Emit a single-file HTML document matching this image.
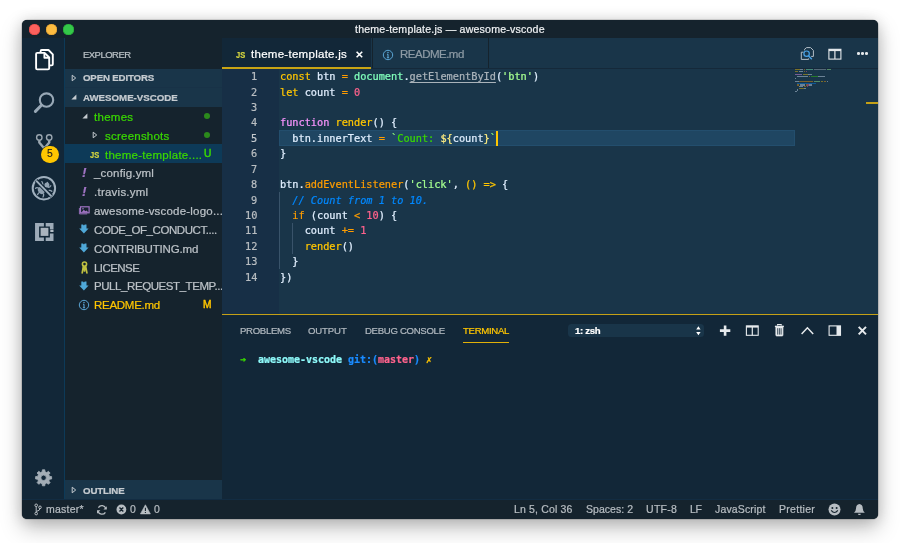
<!DOCTYPE html>
<html lang="en">
<head>
<meta charset="utf-8">
<title>theme-template.js — awesome-vscode</title>
<style>
html,body{margin:0;padding:0;background:#fff;}
body{width:900px;height:543px;position:relative;overflow:hidden;font-family:"Liberation Sans", "DejaVu Sans", sans-serif;}
#win{position:absolute;left:22px;top:20px;width:856px;height:498.6px;border-radius:5px;background:#15232d;
 box-shadow:0 0 0 .6px rgba(0,0,0,.22),0 9px 21px rgba(0,0,0,.25),0 1px 14px rgba(0,0,0,.15);}
#clip{position:absolute;left:22px;top:20px;width:856px;height:498.6px;border-radius:5px;overflow:hidden;}
#abs{position:absolute;left:-22px;top:-20px;width:900px;height:543px;will-change:transform;}
.b{position:absolute;}
.t{position:absolute;white-space:pre;line-height:20px;height:20px;}
.m{font-family:"DejaVu Sans Mono", "Liberation Mono", monospace;}
.t{-webkit-text-stroke:.22px currentColor;transform:rotate(.01deg);}
svg{position:absolute;overflow:visible;}
</style>
</head>
<body>
<div id="win"></div>
<div id="clip"><div id="abs">

<!-- title bar -->
<div class="b" style="left:22.00px;top:20.00px;width:856.00px;height:18.35px;background:#15232d;"></div>
<div class="b" style="left:29.10px;top:24.00px;width:10.6px;height:10.6px;border-radius:50%;background:#fc615d;box-shadow:inset 0 0 0 .6px #df4744;"></div>
<div class="b" style="left:46.20px;top:24.00px;width:10.6px;height:10.6px;border-radius:50%;background:#fdbc40;box-shadow:inset 0 0 0 .6px #de9f34;"></div>
<div class="b" style="left:63.30px;top:24.00px;width:10.6px;height:10.6px;border-radius:50%;background:#34c84a;box-shadow:inset 0 0 0 .6px #27aa35;"></div>
<span class="t" style="left:355.20px;top:19.42px;font-size:10.60px;color:#eef0f2;letter-spacing:0.196px;">theme-template.js — awesome-vscode</span>
<!-- activity bar -->
<div class="b" style="left:22.00px;top:38.35px;width:42.80px;height:461.05px;background:#122738;border-right:1px solid #0d3a58;box-sizing:border-box;"></div>
<svg style="left:34px;top:48px" width="22" height="24" viewBox="0 0 22 24"><g fill="none" stroke="#fff" stroke-width="1.9" stroke-linejoin="round">
<path d="M6.6 4.6V3.2Q6.6 2 7.8 2H14.5L18.8 6.3V16.2Q18.8 17.4 17.6 17.4H15.6"/>
<path d="M3.3 4.9H10.6L15.2 9.5V20.2Q15.2 21.4 14 21.4H3.3Q2.1 21.4 2.1 20.2V6.1Q2.1 4.9 3.3 4.9Z" fill="#122738"/>
<path d="M10.4 5.2V9.8H15"/></g></svg>
<svg style="left:32px;top:91px" width="24" height="24" viewBox="0 0 24 24"><g fill="none" stroke="#98a8b6" stroke-linecap="round">
<circle cx="14.5" cy="9.1" r="6.7" stroke-width="2.1"/><path d="M9.4 14.3L3.4 20.4" stroke-width="3"/></g></svg>
<svg style="left:32px;top:130px" width="26" height="26" viewBox="0 0 26 26"><g fill="none" stroke="#9aa6b0">
<path d="M7.3 10.6V12.6L12.3 18.6M17.2 10.6V12.6L12.3 18.6" stroke-width="2.4" stroke-linejoin="round"/>
<circle cx="7.3" cy="7.5" r="2.7" stroke-width="1.4" fill="#122738"/><circle cx="17.2" cy="7.5" r="2.7" stroke-width="1.4" fill="#122738"/></g></svg>
<div class="b" style="left:41.40px;top:145.60px;width:17.4px;height:17.4px;border-radius:50%;background:#ffc600;box-shadow:0 0 0 .6px #122738;"></div>
<span class="t" style="left:47.20px;top:144.49px;font-size:10.40px;color:#1c1c1c;-webkit-text-stroke:.1px currentColor;">5</span>
<svg style="left:30px;top:174px" width="28" height="28" viewBox="0 0 28 28"><g fill="none" stroke="#a0b0be" stroke-width="2">
<circle cx="13.9" cy="14.2" r="11.2"/>
<g stroke-width="1.3" stroke-linecap="round" stroke="#93a4b3"><path d="M11.9 7.6Q12.8 8.6 12.8 10.6M17.6 8.4Q16.6 9.4 16.4 10.8M9.2 14.4Q6.8 13 5.6 14.2M9.6 18.2Q7.8 19.4 7.6 20.6M13.6 20Q13.8 21.8 13 23M18.2 13.4Q20 13.4 20.8 11.8M19 16.4Q20.8 16.2 21.8 17.2"/></g>
<ellipse cx="11.3" cy="16.5" rx="3.1" ry="3.8" transform="rotate(-40 11.3 16.5)" fill="#8fa0af" stroke="none"/>
<circle cx="16.9" cy="11" r="2.5" fill="#93a4b3" stroke="none"/>
<path d="M6 6.4L21.6 22.4" stroke="#122738" stroke-width="3.8"/><path d="M6.1 6.6L21.5 22.3" stroke-width="1.9"/></g></svg>
<svg style="left:34px;top:222px" width="21" height="20" viewBox="0 0 21 20"><g fill="#9dabb8">
<path d="M1.05 0.9H9.9V4.4H5.1V15.4H9.9V18.9H1.05Z"/>
<path d="M11.7 0.9H19.5V7.3H15.9V4.4H11.7Z"/>
<rect x="16.3" y="7.7" width="3.2" height="2.3" fill="#b3bdc6"/>
<path d="M15.9 11.4H19.5V18.9H11.7V15.4H15.9Z"/></g>
<rect x="6.6" y="5.8" width="7.8" height="8.1" fill="#aab4be"/></svg>
<svg style="left:34px;top:468px" width="20" height="20" viewBox="0 0 20 20"><path fill="#a3adb6" fill-rule="evenodd" stroke="#a3adb6" stroke-width=".8" stroke-linejoin="round" d="M8.18 3.87L8.40 1.79L10.80 1.79L11.02 3.87L12.79 4.60L14.41 3.28L16.12 4.99L14.80 6.61L15.53 8.38L17.61 8.60L17.61 11.00L15.53 11.22L14.80 12.99L16.12 14.61L14.41 16.32L12.79 15.00L11.02 15.73L10.80 17.81L8.40 17.81L8.18 15.73L6.41 15.00L4.79 16.32L3.08 14.61L4.40 12.99L3.67 11.22L1.59 11.00L1.59 8.60L3.67 8.38L4.40 6.61L3.08 4.99L4.79 3.28L6.41 4.60ZM6.90 9.80a2.70 2.70 0 1 0 5.40 0a2.70 2.70 0 1 0 -5.40 0Z"/></svg>
<!-- sidebar -->
<div class="b" style="left:64.80px;top:38.35px;width:157.50px;height:461.05px;background:#15232d;"></div>
<span class="t" style="left:82.90px;top:44.91px;font-size:9.50px;color:#b9c0c5;letter-spacing:-0.527px;">EXPLORER</span>
<div class="b" style="left:64.80px;top:68.80px;width:157.50px;height:37.90px;background:#193549;"></div>
<div class="b" style="left:64.80px;top:87.40px;width:157.50px;height:0.60px;background:#183247;"></div>
<span class="t" style="left:82.90px;top:68.34px;font-size:9.70px;color:#c5cbd0;font-weight:700;letter-spacing:-0.168px;">OPEN EDITORS</span>
<span class="t" style="left:82.90px;top:87.64px;font-size:9.70px;color:#c5cbd0;font-weight:700;">AWESOME-VSCODE</span>
<svg style="left:70.20px;top:73.30px" width="8" height="10" viewBox="0 0 8 10"><path d="M2.2 2.2L5.7 5L2.2 7.8Z" fill="none" stroke="#c5cbd0" stroke-width="1" stroke-linejoin="round"/></svg>
<svg style="left:70.00px;top:93.30px" width="8" height="8" viewBox="0 0 8 8"><path d="M6.4 1.4V6.4H1.4Z" fill="#c5cbd0"/></svg>
<div class="b" style="left:64.80px;top:144.06px;width:157.50px;height:18.83px;background:#0d3a58;"></div>
<svg style="left:81.20px;top:112.10px" width="8" height="8" viewBox="0 0 8 8"><path d="M6.4 1.4V6.4H1.4Z" fill="#c5cbd0"/></svg>
<span class="t" style="left:94.20px;top:106.91px;font-size:11.50px;color:#3ad900;letter-spacing:0.269px;">themes</span>
<svg style="left:91.40px;top:130.13px" width="8" height="10" viewBox="0 0 8 10"><path d="M2.2 2.2L5.7 5L2.2 7.8Z" fill="none" stroke="#c5cbd0" stroke-width="1" stroke-linejoin="round"/></svg>
<span class="t" style="left:104.70px;top:125.74px;font-size:11.50px;color:#3ad900;letter-spacing:0.227px;">screenshots</span>
<div class="b" style="left:203.9px;top:113.20px;width:6.2px;height:6.2px;border-radius:50%;background:#2b8a1c;"></div>
<div class="b" style="left:203.9px;top:132.03px;width:6.2px;height:6.2px;border-radius:50%;background:#2b8a1c;"></div>
<span class="t" style="left:89.90px;top:144.70px;font-size:9.40px;color:#d4d43f;font-weight:700;transform:rotate(.01deg) scaleX(.8);transform-origin:0 50%;">JS</span>
<span class="t" style="left:104.70px;top:144.57px;font-size:11.50px;color:#3ad900;letter-spacing:0.257px;">theme-template....</span>
<span class="t" style="left:204.30px;top:144.32px;font-size:10.20px;color:#3ad900;-webkit-text-stroke:.45px currentColor;">U</span>
<span class="t" style="left:81.60px;top:163.01px;font-size:13.50px;color:#a074c4;font-weight:700;font-style:italic;">!</span>
<span class="t" style="left:94.20px;top:163.40px;font-size:11.50px;color:#bcc2c7;letter-spacing:0.174px;">_config.yml</span>
<span class="t" style="left:81.60px;top:181.84px;font-size:13.50px;color:#a074c4;font-weight:700;font-style:italic;">!</span>
<span class="t" style="left:94.20px;top:182.23px;font-size:11.50px;color:#bcc2c7;letter-spacing:0.243px;">.travis.yml</span>
<svg style="left:78.8px;top:206.15px" width="11" height="9" viewBox="0 0 11 9"><rect x="1.5" y="0.8" width="8.6" height="6" fill="none" stroke="#a074c4" stroke-width="1.2"/><path d="M0.4 2V7.9H8.2" fill="none" stroke="#a074c4" stroke-width=".9"/><path d="M2.4 6.4L4.8 3.8L6.4 5.2L7.6 4.4L9.4 6.4Z" fill="#a074c4"/><circle cx="4" cy="2.8" r="0.8" fill="#a074c4"/></svg>
<span class="t" style="left:94.20px;top:201.06px;font-size:11.50px;color:#bcc2c7;letter-spacing:0.202px;">awesome-vscode-logo....</span>
<svg style="left:79.2px;top:224.08px" width="10" height="10" viewBox="0 0 10 10"><path d="M2.3 0.6H4L4.9 1.5L5.8 0.6H7.5V4.6H9.6L4.9 9.4L0.2 4.6H2.3Z" fill="#4fa8d8"/></svg>
<span class="t" style="left:94.20px;top:219.89px;font-size:11.50px;color:#bcc2c7;letter-spacing:-0.428px;">CODE_OF_CONDUCT....</span>
<svg style="left:79.2px;top:242.91px" width="10" height="10" viewBox="0 0 10 10"><path d="M2.3 0.6H4L4.9 1.5L5.8 0.6H7.5V4.6H9.6L4.9 9.4L0.2 4.6H2.3Z" fill="#4fa8d8"/></svg>
<span class="t" style="left:94.20px;top:238.72px;font-size:11.50px;color:#bcc2c7;letter-spacing:-0.173px;">CONTRIBUTING.md</span>
<svg style="left:79.5px;top:261.04px" width="9" height="13" viewBox="0 0 9 13"><g fill="none" stroke="#c0c040"><circle cx="4.5" cy="3.1" r="2.1" stroke-width="1.6"/><path d="M3.4 5.2L2.2 11.8M5.6 5.2L6.9 11.8M4.5 6V10" stroke-width="1.7" stroke-linecap="round"/></g></svg>
<span class="t" style="left:94.20px;top:257.55px;font-size:11.50px;color:#bcc2c7;letter-spacing:-0.557px;">LICENSE</span>
<svg style="left:79.2px;top:280.57px" width="10" height="10" viewBox="0 0 10 10"><path d="M2.3 0.6H4L4.9 1.5L5.8 0.6H7.5V4.6H9.6L4.9 9.4L0.2 4.6H2.3Z" fill="#4fa8d8"/></svg>
<span class="t" style="left:94.20px;top:276.38px;font-size:11.50px;color:#bcc2c7;letter-spacing:-0.425px;">PULL_REQUEST_TEMP...</span>
<svg style="left:77.80px;top:299.20px" width="12" height="12" viewBox="0 0 12 12"><circle cx="6" cy="6" r="4.7" fill="none" stroke="#5aa5d4" stroke-width="1"/><path d="M6 5.2V8.6M4.9 8.7H7.1M5 5.3H6" stroke="#5aa5d4" stroke-width="1.1" fill="none"/><circle cx="6" cy="3.5" r="0.75" fill="#5aa5d4"/></svg>
<span class="t" style="left:94.20px;top:295.21px;font-size:11.50px;color:#ffc600;letter-spacing:-0.280px;">README.md</span>
<span class="t" style="left:203.30px;top:294.96px;font-size:10.20px;color:#ffc600;-webkit-text-stroke:.45px currentColor;">M</span>
<div class="b" style="left:64.80px;top:480.40px;width:157.50px;height:19.00px;background:#193549;"></div>
<svg style="left:70.20px;top:485.40px" width="8" height="10" viewBox="0 0 8 10"><path d="M2.2 2.2L5.7 5L2.2 7.8Z" fill="none" stroke="#c5cbd0" stroke-width="1" stroke-linejoin="round"/></svg>
<span class="t" style="left:82.90px;top:480.64px;font-size:9.70px;color:#c5cbd0;font-weight:700;letter-spacing:-0.141px;">OUTLINE</span>
<!-- editor group -->
<div class="b" style="left:222.30px;top:38.35px;width:655.70px;height:276.35px;background:#193549;"></div>
<div class="b" style="left:222.30px;top:38.35px;width:149.20px;height:30.45px;background:#122738;"></div>
<div class="b" style="left:222.30px;top:67.40px;width:149.20px;height:1.50px;background:#c9a414;"></div>
<div class="b" style="left:371.50px;top:38.35px;width:0.80px;height:30.45px;background:#15232d;"></div>
<div class="b" style="left:487.60px;top:38.35px;width:0.80px;height:30.45px;background:#15232d;"></div>
<div class="b" style="left:371.50px;top:67.80px;width:506.50px;height:0.80px;background:#15293a;"></div>
<span class="t" style="left:235.50px;top:44.94px;font-size:9.40px;color:#d4d43f;font-weight:700;transform:rotate(.01deg) scaleX(.8);transform-origin:0 50%;">JS</span>
<span class="t" style="left:250.60px;top:44.21px;font-size:11.50px;color:#ffffff;letter-spacing:0.278px;">theme-template.js</span>
<svg style="left:355px;top:50px" width="9" height="9" viewBox="0 0 9 9"><path d="M1.6 1.7L7.2 7.3M7.2 1.7L1.6 7.3" stroke="#fff" stroke-width="1.6" fill="none"/></svg>
<svg style="left:382.40px;top:48.60px" width="12" height="12" viewBox="0 0 12 12"><circle cx="6" cy="6" r="4.7" fill="none" stroke="#5aa5d4" stroke-width="1"/><path d="M6 5.2V8.6M4.9 8.7H7.1M5 5.3H6" stroke="#5aa5d4" stroke-width="1.1" fill="none"/><circle cx="6" cy="3.5" r="0.75" fill="#5aa5d4"/></svg>
<span class="t" style="left:399.50px;top:44.21px;font-size:11.50px;color:#8e9ba5;letter-spacing:-0.503px;">README.md</span>
<svg style="left:800px;top:46px" width="16" height="16" viewBox="0 0 16 16"><g fill="none" stroke="#b4bfc8" stroke-width="1" stroke-linejoin="round">
<path d="M4.6 4.4V3.2L6.6 1.6H10.6L13.4 4.4V10.4H11.2"/><path d="M3.6 6.2H1.3V13.4H8.6V12.4"/></g>
<circle cx="6.6" cy="7.7" r="2.7" fill="none" stroke="#4aa3e8" stroke-width="1.2"/><path d="M8.5 9.7L11.8 13.2" stroke="#4aa3e8" stroke-width="1.4"/></svg>
<svg style="left:828px;top:48px" width="14" height="12" viewBox="0 0 14 12"><rect x="0.9" y="1.3" width="12" height="9.8" fill="none" stroke="#e4e8eb" stroke-width="1.1"/><path d="M0.9 2.1H12.9" stroke="#e4e8eb" stroke-width="2"/><path d="M6.9 2V11" stroke="#e4e8eb" stroke-width="1.2"/></svg>
<div class="b" style="left:857.00px;top:52.3px;width:2.6px;height:2.6px;border-radius:50%;background:#e4e8eb;"></div>
<div class="b" style="left:861.20px;top:52.3px;width:2.6px;height:2.6px;border-radius:50%;background:#e4e8eb;"></div>
<div class="b" style="left:865.40px;top:52.3px;width:2.6px;height:2.6px;border-radius:50%;background:#e4e8eb;"></div>
<!-- editor -->
<div class="b" style="left:222.30px;top:68.80px;width:56.50px;height:245.90px;background:#172f46;"></div>
<div class="b" style="left:279.20px;top:130.44px;width:516.00px;height:15.41px;background:#1f4662;box-shadow:inset 0 0 0 1px #234e6d;"></div>
<div class="b" style="left:279.20px;top:192.08px;width:0.70px;height:77.05px;background:#39536a;"></div>
<div class="b" style="left:291.90px;top:222.90px;width:0.70px;height:30.82px;background:#39536a;"></div>
<span class="t m ln" style="left:251.41px;top:66.24px;font-size:10.27px;color:#b9bec2;">1</span>
<span class="t m code" style="left:279.60px;top:66.24px;font-size:10.27px;color:#e1efff;letter-spacing:-0.012px;"><span style="color:#ffc600;">const</span><span style="color:#e1efff;"> btn </span><span style="color:#ff9d00;">=</span><span style="color:#e1efff;"> </span><span style="color:#80ffbb;">document</span><span style="color:#e1efff;">.</span><span style="color:#aab3ba;text-decoration:underline;text-decoration-thickness:.8px;text-underline-offset:1.5px;">getElementById</span><span style="color:#e1efff;">(</span><span style="color:#a5ff90;">'btn'</span><span style="color:#e1efff;">)</span></span>
<span class="t m ln" style="left:251.41px;top:81.65px;font-size:10.27px;color:#b9bec2;">2</span>
<span class="t m code" style="left:279.60px;top:81.65px;font-size:10.27px;color:#e1efff;letter-spacing:-0.013px;"><span style="color:#ffc600;">let</span><span style="color:#e1efff;"> count </span><span style="color:#ff9d00;">=</span><span style="color:#e1efff;"> </span><span style="color:#ff628c;">0</span></span>
<span class="t m ln" style="left:251.41px;top:97.06px;font-size:10.27px;color:#b9bec2;">3</span>
<span class="t m ln" style="left:251.41px;top:112.47px;font-size:10.27px;color:#b9bec2;">4</span>
<span class="t m code" style="left:279.60px;top:112.47px;font-size:10.27px;color:#e1efff;letter-spacing:-0.013px;"><span style="color:#fb94ff;">function</span><span style="color:#e1efff;"> </span><span style="color:#ffc600;">render</span><span style="color:#e1efff;">() {</span></span>
<span class="t m ln" style="left:251.41px;top:127.88px;font-size:10.27px;color:#c6cbcf;">5</span>
<span class="t m code" style="left:279.60px;top:127.88px;font-size:10.27px;color:#e1efff;letter-spacing:-0.012px;"><span style="color:#e1efff;">  btn.innerText </span><span style="color:#ff9d00;">=</span><span style="color:#e1efff;"> </span><span style="color:#92fc79;">`</span><span style="color:#3ad900;">Count: </span><span style="color:#ffee80;">${</span><span style="color:#e1efff;">count</span><span style="color:#ffee80;">}</span><span style="color:#92fc79;">`</span></span>
<span class="t m ln" style="left:251.41px;top:143.29px;font-size:10.27px;color:#b9bec2;">6</span>
<span class="t m code" style="left:279.60px;top:143.29px;font-size:10.27px;color:#e1efff;letter-spacing:-0.021px;"><span style="color:#e1efff;">}</span></span>
<span class="t m ln" style="left:251.41px;top:158.70px;font-size:10.27px;color:#b9bec2;">7</span>
<span class="t m ln" style="left:251.41px;top:174.11px;font-size:10.27px;color:#b9bec2;">8</span>
<span class="t m code" style="left:279.60px;top:174.11px;font-size:10.27px;color:#e1efff;letter-spacing:-0.013px;"><span style="color:#e1efff;">btn.</span><span style="color:#ff9d00;">addEventListener</span><span style="color:#e1efff;">(</span><span style="color:#a5ff90;">'click'</span><span style="color:#e1efff;">, </span><span style="color:#ffc600;">()</span><span style="color:#e1efff;"> </span><span style="color:#ffc600;">=&gt;</span><span style="color:#e1efff;"> {</span></span>
<span class="t m ln" style="left:251.41px;top:189.52px;font-size:10.27px;color:#b9bec2;">9</span>
<span class="t m code" style="left:279.60px;top:189.52px;font-size:10.27px;color:#e1efff;letter-spacing:-0.012px;"><span style="color:#e1efff;">  </span><span style="color:#0088ff;font-style:italic;">// Count from 1 to 10.</span></span>
<span class="t m ln" style="left:245.22px;top:204.93px;font-size:10.27px;color:#b9bec2;">10</span>
<span class="t m code" style="left:279.60px;top:204.93px;font-size:10.27px;color:#e1efff;letter-spacing:-0.014px;"><span style="color:#e1efff;">  </span><span style="color:#ff9d00;">if</span><span style="color:#e1efff;"> (count </span><span style="color:#ff9d00;">&lt;</span><span style="color:#e1efff;"> </span><span style="color:#ff628c;">10</span><span style="color:#e1efff;">) {</span></span>
<span class="t m ln" style="left:245.22px;top:220.34px;font-size:10.27px;color:#b9bec2;">11</span>
<span class="t m code" style="left:279.60px;top:220.34px;font-size:10.27px;color:#e1efff;letter-spacing:-0.013px;"><span style="color:#e1efff;">    count </span><span style="color:#ff9d00;">+=</span><span style="color:#e1efff;"> </span><span style="color:#ff628c;">1</span></span>
<span class="t m ln" style="left:245.22px;top:235.75px;font-size:10.27px;color:#b9bec2;">12</span>
<span class="t m code" style="left:279.60px;top:235.75px;font-size:10.27px;color:#e1efff;letter-spacing:-0.014px;"><span style="color:#e1efff;">    </span><span style="color:#ffc600;">render</span><span style="color:#e1efff;">()</span></span>
<span class="t m ln" style="left:245.22px;top:251.16px;font-size:10.27px;color:#b9bec2;">13</span>
<span class="t m code" style="left:279.60px;top:251.16px;font-size:10.27px;color:#e1efff;letter-spacing:-0.013px;"><span style="color:#e1efff;">  }</span></span>
<span class="t m ln" style="left:245.22px;top:266.57px;font-size:10.27px;color:#b9bec2;">14</span>
<span class="t m code" style="left:279.60px;top:266.57px;font-size:10.27px;color:#e1efff;letter-spacing:-0.019px;"><span style="color:#e1efff;">})</span></span>
<div class="b" style="left:496.20px;top:131.04px;width:1.70px;height:14.61px;background:#ffc600;"></div>
<!-- minimap -->
<div class="b" style="left:795.20px;top:69.20px;width:4.37px;height:1.1px;background:#ffc600;opacity:.42;"></div>
<div class="b" style="left:800.44px;top:69.20px;width:2.62px;height:1.1px;background:#e1efff;opacity:.42;"></div>
<div class="b" style="left:803.93px;top:69.20px;width:0.87px;height:1.1px;background:#ff9d00;opacity:.42;"></div>
<div class="b" style="left:805.68px;top:69.20px;width:6.98px;height:1.1px;background:#80ffbb;opacity:.42;"></div>
<div class="b" style="left:813.53px;top:69.20px;width:12.22px;height:1.1px;background:#aab3ba;opacity:.42;"></div>
<div class="b" style="left:826.63px;top:69.20px;width:4.37px;height:1.1px;background:#a5ff90;opacity:.42;"></div>
<div class="b" style="left:795.20px;top:70.89px;width:2.62px;height:1.1px;background:#ffc600;opacity:.42;"></div>
<div class="b" style="left:798.69px;top:70.89px;width:4.37px;height:1.1px;background:#e1efff;opacity:.42;"></div>
<div class="b" style="left:803.93px;top:70.89px;width:0.87px;height:1.1px;background:#ff9d00;opacity:.42;"></div>
<div class="b" style="left:805.68px;top:70.89px;width:0.87px;height:1.1px;background:#ff628c;opacity:.42;"></div>
<div class="b" style="left:795.20px;top:74.27px;width:6.98px;height:1.1px;background:#fb94ff;opacity:.42;"></div>
<div class="b" style="left:803.06px;top:74.27px;width:5.24px;height:1.1px;background:#ffc600;opacity:.42;"></div>
<div class="b" style="left:808.30px;top:74.27px;width:3.49px;height:1.1px;background:#e1efff;opacity:.42;"></div>
<div class="b" style="left:796.95px;top:75.96px;width:11.35px;height:1.1px;background:#e1efff;opacity:.42;"></div>
<div class="b" style="left:809.17px;top:75.96px;width:0.87px;height:1.1px;background:#ff9d00;opacity:.42;"></div>
<div class="b" style="left:810.91px;top:75.96px;width:6.98px;height:1.1px;background:#3ad900;opacity:.42;"></div>
<div class="b" style="left:817.90px;top:75.96px;width:6.98px;height:1.1px;background:#e1efff;opacity:.42;"></div>
<div class="b" style="left:795.20px;top:77.65px;width:0.87px;height:1.1px;background:#e1efff;opacity:.42;"></div>
<div class="b" style="left:795.20px;top:81.03px;width:3.49px;height:1.1px;background:#e1efff;opacity:.42;"></div>
<div class="b" style="left:798.69px;top:81.03px;width:13.97px;height:1.1px;background:#ff9d00;opacity:.42;"></div>
<div class="b" style="left:813.53px;top:81.03px;width:6.11px;height:1.1px;background:#a5ff90;opacity:.42;"></div>
<div class="b" style="left:821.39px;top:81.03px;width:1.75px;height:1.1px;background:#ffc600;opacity:.42;"></div>
<div class="b" style="left:824.01px;top:81.03px;width:1.75px;height:1.1px;background:#ff9d00;opacity:.42;"></div>
<div class="b" style="left:826.63px;top:81.03px;width:0.87px;height:1.1px;background:#e1efff;opacity:.42;"></div>
<div class="b" style="left:796.95px;top:82.72px;width:19.21px;height:1.1px;background:#0088ff;opacity:.42;"></div>
<div class="b" style="left:796.95px;top:84.41px;width:1.75px;height:1.1px;background:#ff9d00;opacity:.42;"></div>
<div class="b" style="left:799.57px;top:84.41px;width:5.24px;height:1.1px;background:#e1efff;opacity:.42;"></div>
<div class="b" style="left:805.68px;top:84.41px;width:0.87px;height:1.1px;background:#ff9d00;opacity:.42;"></div>
<div class="b" style="left:807.42px;top:84.41px;width:1.75px;height:1.1px;background:#ff628c;opacity:.42;"></div>
<div class="b" style="left:809.17px;top:84.41px;width:2.62px;height:1.1px;background:#e1efff;opacity:.42;"></div>
<div class="b" style="left:798.69px;top:86.10px;width:4.37px;height:1.1px;background:#e1efff;opacity:.42;"></div>
<div class="b" style="left:803.93px;top:86.10px;width:1.75px;height:1.1px;background:#ff9d00;opacity:.42;"></div>
<div class="b" style="left:806.55px;top:86.10px;width:0.87px;height:1.1px;background:#ff628c;opacity:.42;"></div>
<div class="b" style="left:798.69px;top:87.79px;width:5.24px;height:1.1px;background:#ffc600;opacity:.42;"></div>
<div class="b" style="left:803.93px;top:87.79px;width:1.75px;height:1.1px;background:#e1efff;opacity:.42;"></div>
<div class="b" style="left:796.95px;top:89.48px;width:0.87px;height:1.1px;background:#e1efff;opacity:.42;"></div>
<div class="b" style="left:795.20px;top:91.17px;width:1.75px;height:1.1px;background:#e1efff;opacity:.42;"></div>
<div class="b" style="left:865.80px;top:101.70px;width:12.20px;height:1.90px;background:#c4a016;"></div>
<!-- panel -->
<div class="b" style="left:222.30px;top:314.70px;width:655.70px;height:184.70px;background:#122738;"></div>
<div class="b" style="left:222.30px;top:313.90px;width:655.70px;height:1.50px;background:#c4a016;"></div>
<span class="t" style="left:240.10px;top:320.77px;font-size:9.60px;color:#b0b8bf;letter-spacing:-0.311px;">PROBLEMS</span>
<span class="t" style="left:308.10px;top:320.77px;font-size:9.60px;color:#b0b8bf;letter-spacing:-0.138px;">OUTPUT</span>
<span class="t" style="left:364.80px;top:320.77px;font-size:9.60px;color:#b0b8bf;letter-spacing:-0.305px;">DEBUG CONSOLE</span>
<span class="t" style="left:462.50px;top:320.77px;font-size:9.60px;color:#ffc600;letter-spacing:-0.309px;">TERMINAL</span>
<div class="b" style="left:462.50px;top:341.80px;width:46.20px;height:1.00px;background:#e0b008;"></div>
<span class="t m" style="left:240.00px;top:349.85px;font-size:9.97px;color:#3ad900;font-weight:700;transform:rotate(.01deg) scale(1.05,.9);transform-origin:0 62%;">➜</span>
<span class="t m" style="left:258.00px;top:349.85px;font-size:9.97px;color:#8ef9f9;font-weight:700;letter-spacing:0.005px;">awesome-vscode</span>
<span class="t m" style="left:348.00px;top:349.85px;font-size:9.97px;color:#1a8bff;font-weight:700;">git:(</span>
<span class="t m" style="left:378.00px;top:349.85px;font-size:9.97px;color:#ff628c;font-weight:700;">master</span>
<span class="t m" style="left:414.00px;top:349.85px;font-size:9.97px;color:#1a8bff;font-weight:700;">)</span>
<span class="t m" style="left:425.60px;top:349.85px;font-size:9.97px;color:#ffc600;font-weight:700;">✗</span>
<div class="b" style="left:568px;top:323.9px;width:135.6px;height:13.5px;border-radius:3.5px;background:#193549;"></div>
<span class="t" style="left:575.10px;top:320.87px;font-size:9.60px;color:#ffffff;font-weight:700;letter-spacing:-0.328px;">1: zsh</span>
<svg style="left:695px;top:325px" width="7" height="12" viewBox="0 0 7 12"><path d="M3.4 1.3L5.6 4.5H1.2ZM3.4 10.3L5.6 7.1H1.2Z" fill="#fff"/></svg>
<svg style="left:719px;top:324px" width="13" height="13" viewBox="0 0 13 13"><path d="M6.1 1.4V11.8M0.9 6.6H11.3" stroke="#e6eaed" stroke-width="2.6" fill="none"/></svg>
<svg style="left:745px;top:324px" width="15" height="13" viewBox="0 0 15 13"><rect x="1.4" y="1.9" width="11.8" height="9.4" fill="none" stroke="#e6eaed" stroke-width="1.1"/><path d="M1.4 2.7H13.2" stroke="#e6eaed" stroke-width="1.8"/><path d="M7.3 2V11.4" stroke="#e6eaed" stroke-width="1.2"/></svg>
<svg style="left:774px;top:323px" width="11" height="14" viewBox="0 0 11 14"><g fill="none" stroke="#e6eaed"><path d="M0.9 3.4H9.9" stroke-width="1.4"/><path d="M3.6 2.6V1.5H7.2V2.6" stroke-width="1.1"/><path d="M1.9 4V12.2Q1.9 12.9 2.6 12.9H8.2Q8.9 12.9 8.9 12.2V4Z" fill="#e6eaed" stroke-width=".8"/></g><path d="M3.7 5.2V11.6M5.4 5.2V11.6M7.1 5.2V11.6" stroke="#122738" stroke-width=".8"/></svg>
<svg style="left:800px;top:325px" width="15" height="11" viewBox="0 0 15 11"><path d="M1.6 8.9L7.4 2.8L13.2 8.9" fill="none" stroke="#e6eaed" stroke-width="1.5"/></svg>
<svg style="left:828px;top:324px" width="14" height="13" viewBox="0 0 14 13"><rect x="1.1" y="1.9" width="11.4" height="9.4" fill="none" stroke="#e6eaed" stroke-width="1.1"/><rect x="8.5" y="1.9" width="4" height="9.4" fill="#e6eaed"/></svg>
<svg style="left:857px;top:325px" width="11" height="11" viewBox="0 0 11 11"><path d="M1.7 1.9L9 9.4M9 1.9L1.7 9.4" stroke="#e6eaed" stroke-width="2" fill="none"/></svg>
<!-- status bar -->
<div class="b" style="left:22.00px;top:499.40px;width:856.00px;height:19.60px;background:#15232d;border-top:1px solid #122c42;box-sizing:border-box;"></div>
<svg style="left:34px;top:503px" width="8" height="13" viewBox="0 0 8 13"><g fill="none" stroke="#b7bdc2" stroke-width="1"><circle cx="2.2" cy="2.3" r="1.3"/><circle cx="2.2" cy="10.6" r="1.3"/><circle cx="6" cy="4.3" r="1.3"/><path d="M2.2 3.6V9.3M6 5.6Q6 7.6 2.4 8.4"/></g></svg>
<span class="t" style="left:46.00px;top:498.96px;font-size:10.50px;color:#b7bdc2;letter-spacing:0.248px;">master*</span>
<svg style="left:96px;top:503.5px" width="12" height="12" viewBox="0 0 12 12"><g fill="none" stroke="#b7bdc2" stroke-width="1.3"><path d="M9.8 4.6A4.1 4.1 0 0 0 2.4 3.6"/><path d="M2 7.2A4.1 4.1 0 0 0 9.4 8.3"/></g><path d="M10.8 2.2V5.6H7.4ZM1 9.7V6.3H4.4Z" fill="#b7bdc2"/></svg>
<svg style="left:116px;top:504px" width="11" height="11" viewBox="0 0 11 11"><circle cx="5.4" cy="5.5" r="4.9" fill="#b7bdc2"/><path d="M3.5 3.6L7.3 7.4M7.3 3.6L3.5 7.4" stroke="#15232d" stroke-width="1.4"/></svg>
<span class="t" style="left:130.00px;top:498.96px;font-size:10.50px;color:#b7bdc2;">0</span>
<svg style="left:140px;top:504px" width="11" height="11" viewBox="0 0 11 11"><path d="M5.4 0.8L10.4 9.9H0.4Z" fill="#b7bdc2" stroke="#b7bdc2" stroke-width=".6" stroke-linejoin="round"/><path d="M5.4 3.8V6.9M5.4 7.9V9" stroke="#15232d" stroke-width="1.1"/></svg>
<span class="t" style="left:153.90px;top:498.96px;font-size:10.50px;color:#b7bdc2;">0</span>
<span class="t" style="left:513.80px;top:498.96px;font-size:10.50px;color:#b7bdc2;letter-spacing:0.154px;">Ln 5, Col 36</span>
<span class="t" style="left:585.60px;top:498.96px;font-size:10.50px;color:#b7bdc2;letter-spacing:0.046px;">Spaces: 2</span>
<span class="t" style="left:646.00px;top:498.96px;font-size:10.50px;color:#b7bdc2;letter-spacing:0.299px;">UTF-8</span>
<span class="t" style="left:690.00px;top:498.96px;font-size:10.50px;color:#b7bdc2;letter-spacing:-0.446px;">LF</span>
<span class="t" style="left:715.10px;top:498.96px;font-size:10.50px;color:#b7bdc2;letter-spacing:0.154px;">JavaScript</span>
<span class="t" style="left:778.90px;top:498.96px;font-size:10.50px;color:#b7bdc2;letter-spacing:0.287px;">Prettier</span>
<svg style="left:828px;top:503px" width="13" height="13" viewBox="0 0 13 13"><circle cx="6.5" cy="6.4" r="6" fill="#b7bdc2"/><circle cx="4.4" cy="4.9" r="1" fill="#15232d"/><circle cx="8.6" cy="4.9" r="1" fill="#15232d"/><path d="M3.2 7.4Q6.5 11.6 9.8 7.4" fill="none" stroke="#15232d" stroke-width="1.2"/></svg>
<svg style="left:853px;top:503px" width="13" height="13" viewBox="0 0 13 13"><path d="M6.4 1Q9.6 1.4 9.8 5.4Q9.9 8.4 11.8 9.8H1Q2.9 8.4 3 5.4Q3.2 1.4 6.4 1Z" fill="#b7bdc2"/><path d="M5.1 10.8H7.7V11.4Q6.4 12.6 5.1 11.4Z" fill="#b7bdc2"/></svg>
</div></div>
</body>
</html>
